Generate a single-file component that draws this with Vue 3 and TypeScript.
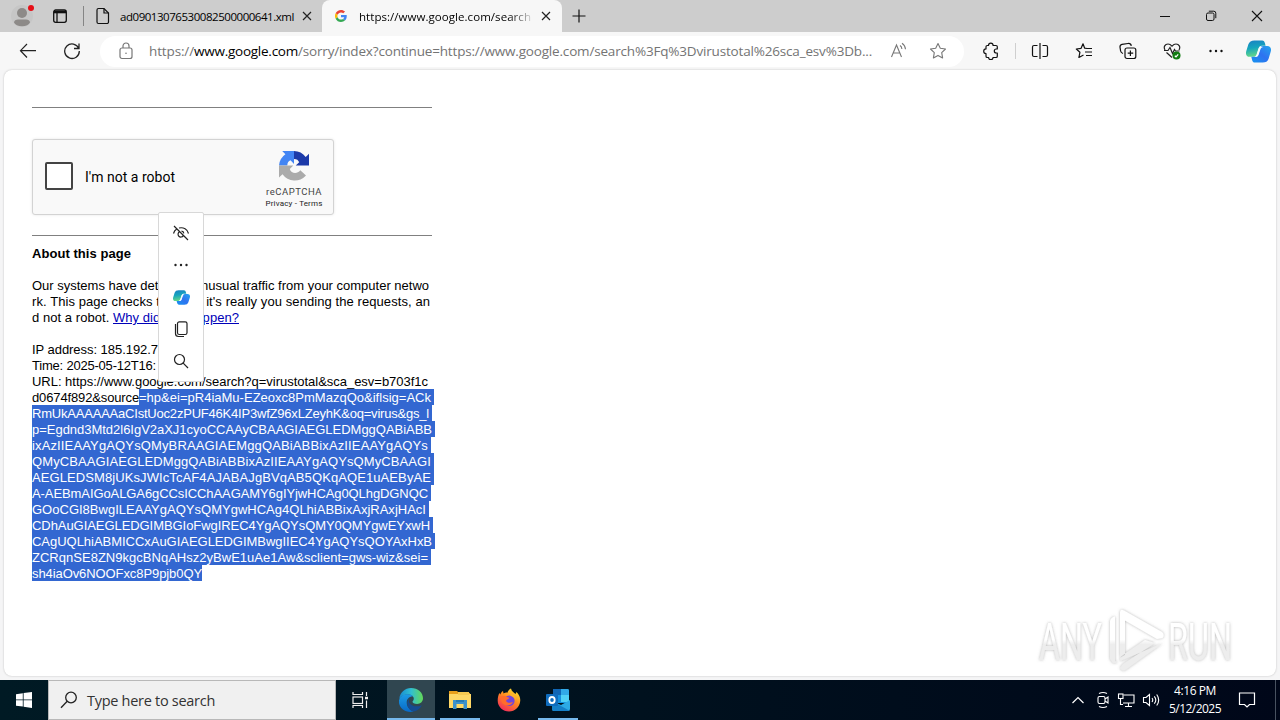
<script setup lang="ts">
import type { Directive } from 'vue'

// Spreads letters so that a run of text takes up the given width in pixels.
const vFit: Directive<HTMLElement, number> = {
  mounted(el, binding) {
    const count = (el.textContent ?? '').length
    const natural = el.getBoundingClientRect().width
    if (count > 0) el.style.letterSpacing = `${(binding.value - natural) / count}px`
  },
}

interface Line { text: string; width: number }

const selected: Line[] = [
  { text: 'RmUkAAAAAAaCIstUoc2zPUF46K4IP3wfZ96xLZeyhK&oq=virus&gs_l', width: 397 },
  { text: 'p=Egdnd3Mtd2l6IgV2aXJ1cyoCCAAyCBAAGIAEGLEDMggQABiABB', width: 400 },
  { text: 'ixAzIIEAAYgAQYsQMyBRAAGIAEMggQABiABBixAzIIEAAYgAQYs', width: 396 },
  { text: 'QMyCBAAGIAEGLEDMggQABiABBixAzIIEAAYgAQYsQMyCBAAGI', width: 399 },
  { text: 'AEGLEDSM8jUKsJWIcTcAF4AJABAJgBVqAB5QKqAQE1uAEByAE', width: 399 },
  { text: 'A-AEBmAIGoALGA6gCCsICChAAGAMY6gIYjwHCAg0QLhgDGNQC', width: 396 },
  { text: 'GOoCGI8BwgILEAAYgAQYsQMYgwHCAg4QLhiABBixAxjRAxjHAcI', width: 394 },
  { text: 'CDhAuGIAEGLEDGIMBGIoFwgIREC4YgAQYsQMY0QMYgwEYxwH', width: 398 },
  { text: 'CAgUQLhiABMICCxAuGIAEGLEDGIMBwgIIEC4YgAQYsQOYAxHxB', width: 400 },
  { text: 'ZCRqnSE8ZN9kgcBNqAHsz2yBwE1uAe1Aw&sclient=gws-wiz&sei=', width: 396 },
]
</script>

<template>
  <div class="screen">
    <svg class="defs" width="0" height="0" aria-hidden="true">
      <defs>
        <linearGradient id="cpA" x1="0" y1="0" x2="0.2" y2="1">
          <stop offset="0" stop-color="#1a7fc4" /><stop offset=".5" stop-color="#15a5bd" /><stop offset="1" stop-color="#62d68a" />
        </linearGradient>
        <linearGradient id="cpB" x1="1" y1="0" x2="0" y2="1">
          <stop offset="0" stop-color="#23a5ee" /><stop offset=".5" stop-color="#2f72f0" /><stop offset="1" stop-color="#1595f0" />
        </linearGradient>
        <symbol id="copilot" viewBox="0 0 24 24">
          <path d="M8 .5h7.500c1.600 0 2.300 1.300 2.700 3l.6 2.500h-3.600c-1.600 0-2.400.9-2.900 2.400l-1.800 6.600c-.5 1.700-1.500 2.500-3.300 2.500H3.500C.3 17.500-.6 14.500.3 11.500l2-7C3.200 1.800 5 .5 8 .5z" fill="url(#cpA)" />
          <path d="M16 23.500H8.500c-1.600 0-2.300-1.300-2.700-3L5.100 17.500h3.600c1.600 0 2.400-.4 2.900-1.900l1.900-6.800c.5-1.700 1.500-2.500 3.200-2.500h3.800c3.200 0 4.100 3 3.200 6l-2 7.200c-.9 2.700-2.700 4-5.700 4z" fill="url(#cpB)" />
          <path d="M13.200 7.200h3.600c-1.700.2-2.500 1-3 2.600l-1.600 5.400c-.4 1.300-1 2-2.100 2.300H7.700c1.300-.3 2-1.100 2.500-2.600l1.700-5.700c.3-1 .7-1.600 1.300-2z" fill="#f4fbff" />
        </symbol>
      </defs>
    </svg>

    <header class="tabs">
      <div class="profile">
        <svg width="28" height="30" viewBox="0 0 28 30"><circle cx="14" cy="16" r="11" fill="#c6c6c6" /><circle cx="14" cy="13" r="5" fill="#8d8a88" /><path d="M6 22.500c0-2 2-3 4-3h8c2 0 4 1 4 3-1 2.300-4 3.700-8 3.700s-7-1.400-8-3.700z" fill="#8d8a88" /><circle cx="23" cy="8" r="3" fill="#e60f17" /></svg>
      </div>
      <div class="workspace">
        <svg width="16" height="16" viewBox="0 0 16 16" fill="none" stroke="#111" stroke-width="1.300"><rect x="1.700" y="2" width="12.600" height="12.300" rx="2" /><path d="M2 4h12" stroke-width="2.600" /><path d="M5 4v10" /></svg>
      </div>
      <span class="sep"></span>
      <div class="tab idle">
        <svg width="14" height="18" viewBox="0 0 14 18" fill="none" stroke="#111" stroke-width="1.200"><path d="M2.500 1.500H8l4.500 4.500v9a1.500 1.500 0 0 1-1.500 1.500H2.500A1.500 1.500 0 0 1 1 15V3a1.500 1.500 0 0 1 1.500-1.500z" /><path d="M8 1.500V6h4.500" /></svg>
        <span class="tab-title"><span v-fit="174">ad09013076530082500000641.xml</span></span>
        <svg class="close" width="10" height="10" viewBox="0 0 10 10" stroke="#222" stroke-width="1.200"><path d="M1 1l8 8M9 1L1 9" /></svg>
      </div>
      <div class="tab active">
        <svg class="google" width="12" height="12" viewBox="0 0 48 48"><path fill="#ea4335" d="M24 9.500c3.540 0 6.710 1.220 9.210 3.600l6.850-6.850C35.900 2.380 30.470 0 24 0 14.620 0 6.510 5.380 2.560 13.220l7.980 6.190C12.430 13.720 17.740 9.500 24 9.500z" /><path fill="#4285f4" d="M46.980 24.550c0-1.570-.15-3.090-.38-4.550H24v9.020h12.940c-.58 2.960-2.260 5.480-4.780 7.180l7.730 6c4.510-4.180 7.090-10.360 7.090-17.650z" /><path fill="#fbbc05" d="M10.530 28.590a14.500 14.500 0 0 1 0-9.180l-7.980-6.190a24 24 0 0 0 0 21.560z" /><path fill="#34a853" d="M24 48c6.480 0 11.930-2.130 15.890-5.810l-7.730-6c-2.150 1.450-4.920 2.300-8.160 2.300-6.260 0-11.570-4.220-13.470-9.910l-7.980 6.190C6.510 42.620 14.620 48 24 48z" /></svg>
        <span class="tab-title fade"><span v-fit="172">https://www.google.com/search</span></span>
        <svg class="close" width="10" height="10" viewBox="0 0 10 10" stroke="#222" stroke-width="1.200"><path d="M1 1l8 8M9 1L1 9" /></svg>
      </div>
      <svg class="plus" width="14" height="14" viewBox="0 0 14 14" stroke="#111" stroke-width="1.200"><path d="M7 .5v13M.5 7h13" /></svg>
      <div class="winbtns">
        <svg width="12" height="12" viewBox="0 0 12 12" stroke="#111"><path d="M1 6.500h10" /></svg>
        <svg width="12" height="12" viewBox="0 0 12 12" fill="none" stroke="#111"><rect x="1.500" y="3" width="7.500" height="7.500" rx="1.500" /><path d="M3.800 1.200h5a2 2 0 0 1 2 2v5" /></svg>
        <svg width="12" height="12" viewBox="0 0 12 12" stroke="#111" stroke-width="1.100"><path d="M1 1l10 10M11 1L1 11" /></svg>
      </div>
    </header>

    <nav class="toolbar">
      <div class="tool"><svg width="18" height="16" viewBox="0 0 18 16" fill="none" stroke="#222" stroke-width="1.200"><path d="M8 1L1.500 7.700 8 14.500M1.500 7.700H17" /></svg></div>
      <div class="tool"><svg width="18" height="18" viewBox="0 0 18 18" fill="none" stroke="#222" stroke-width="1.300"><path d="M15.800 6.500A7.300 7.300 0 1 0 16.300 9M16 1.500v5h-5" /></svg></div>
      <div class="address">
        <svg class="lock" width="14" height="18" viewBox="0 0 14 18" fill="none" stroke="#777" stroke-width="1.200"><rect x="1" y="6" width="12" height="10.500" rx="2" /><path d="M4 6V4a3 3 0 0 1 6 0v2" /><circle cx="7" cy="11.300" r=".8" fill="#777" stroke="none" /></svg>
        <span class="url"><span v-fit="45">https://</span><span v-fit="104" class="host">www.google.com</span><span v-fit="574">/sorry/index?continue=https://www.google.com/search%3Fq%3Dvirustotal%26sca_esv%3Db...</span></span>
        <svg class="read" width="18" height="18" viewBox="0 0 18 18" fill="none" stroke="#777" stroke-width="1.100"><path d="M1.500 15L6.500 3l5 12M3.300 11h6.500M10 3.500c1.300.8 1.800 2 1.900 3.500M12 1.200c2.300 1.400 3.300 3.400 3.500 6" /></svg>
        <svg class="star" width="18" height="18" viewBox="0 0 18 18" fill="none" stroke="#777" stroke-width="1.100" stroke-linejoin="round"><path d="M9 1.500l2.300 4.800 5.200.7-3.800 3.600.9 5.300L9 13.400l-4.600 2.500.9-5.300L1.500 7l5.200-.7z" /></svg>
      </div>
      <div class="tool first"><svg width="18" height="18" viewBox="0 0 18 18" fill="none" stroke="#111" stroke-width="1.200" stroke-linejoin="round"><path d="M6.500 3.500a2.300 2.300 0 0 1 4.600 0H14a1.300 1.300 0 0 1 1.300 1.300V7h-1a2 2 0 0 0 0 4h1v3.200a1.300 1.300 0 0 1-1.300 1.300h-3a2.200 2.200 0 0 1-4.400 0H5.300A1.300 1.300 0 0 1 4 14.200v-2.700a2.300 2.300 0 0 1 0-4.600V4.800a1.300 1.300 0 0 1 1.300-1.300z" /></svg></div>
      <span class="divider"></span>
      <div class="tool split"><svg width="18" height="18" viewBox="0 0 18 18" fill="none" stroke="#111" stroke-width="1.200"><path d="M9 1v16M6.500 3.500H3A1.500 1.500 0 0 0 1.500 5v8A1.500 1.500 0 0 0 3 14.500h3.500M11.500 3.500H15A1.500 1.500 0 0 1 16.500 5v8a1.500 1.500 0 0 1-1.500 1.500h-3.500" /></svg></div>
      <div class="tool"><svg width="18" height="18" viewBox="0 0 18 18" fill="none" stroke="#111" stroke-width="1.200" stroke-linejoin="round"><path d="M12 6.500L9.700 6.200 8 1.800 6.100 6.300l-4.800.7 3.600 3.300-1 5.200L8.500 13M11 6.500h6M10 10h7M11 13.500h6" /></svg></div>
      <div class="tool"><svg width="18" height="18" viewBox="0 0 18 18" fill="none" stroke="#111" stroke-width="1.200"><rect x="6" y="6" width="10.800" height="10.500" rx="2" /><path d="M11.400 8.500v5.500M8.700 11.200h5.500M4 11.500C2.500 11 1.800 10 1.600 9L1 5.200C.8 3.500 1.500 2.700 3 2.400L9 1.500c2-.2 3 .5 3.300 2.300" /></svg></div>
      <div class="tool"><svg width="18" height="18" viewBox="0 0 18 18" fill="none" stroke="#222" stroke-width="1.200"><path d="M2 8C.2 5 2 2 5 2c1.700 0 3 1 4 2.200C10 3 11.300 2 13 2c3 0 4.800 3 3 6M3.500 10.500L9 15.500M1 8.500h4l2-3 2.500 6 2-4 1 1.500h4" /><circle cx="13.500" cy="13.500" r="4" fill="#107c10" stroke="none" /><path d="M11.800 13.700l1.200 1.100 2.200-2.500" stroke="#fff" /></svg></div>
      <div class="tool"><svg width="16" height="4" viewBox="0 0 16 4" fill="#111"><circle cx="2.500" cy="2" r="1.200" /><circle cx="8" cy="2" r="1.200" /><circle cx="13.500" cy="2" r="1.200" /></svg></div>
      <div class="tool cop"><svg width="25" height="23" viewBox="0 0 24 24" preserveAspectRatio="none"><use href="#copilot" width="24" height="24" /></svg></div>
    </nav>

    <main class="page">
      <div class="content">
        <hr />
        <section class="captcha">
          <span class="box"></span>
          <span class="robot"><span v-fit="90">I'm not a robot</span></span>
          <div class="brand">
            <svg width="32" height="32" viewBox="0 0 32 32"><path d="M31 15.500V3.800l-3.300 3.300A15 15 0 0 0 16 1v8c3 0 4.200 1.200 5.200 3.300l-3.500 3.200z" fill="#1c3aa9" /><path d="M16 1H4.200l3.200 3.300A15 15 0 0 0 1 15.500h8.300c0-3 1.300-4.400 3.200-5.300l3.500 3.700z" fill="#4285f4" /><path d="M1 15.500v12l3.500-3.300A15 15 0 0 0 28 25.500l-5.700-5.300c-3 4.200-9.300 3.300-10.500-1.200l3.500-3.500z" fill="#ababab" /></svg>
            <span class="name"><span v-fit="56">reCAPTCHA</span></span>
            <span class="legal"><span v-fit="57">Privacy - Terms</span></span>
          </div>
        </section>
        <hr class="second" />
        <div class="text">
          <p><b v-fit="99">About this page</b></p>
          <p></p>
          <p><span v-fit="397">Our systems have detected unusual traffic from your computer netwo</span></p>
          <p><span v-fit="398">rk. This page checks to see if it's really you sending the requests, an</span></p>
          <p><span v-fit="81">d not a robot. </span><a v-fit="126">Why did this happen?</a></p>
          <p></p>
          <p><span v-fit="126">IP address: 185.192.7</span></p>
          <p><span v-fit="124">Time: 2025-05-12T16:</span></p>
          <p><span v-fit="396">URL: https://www.google.com/search?q=virustotal&amp;sca_esv=b703f1c</span></p>
          <p><span v-fit="107">d0674f892&amp;source</span><span class="sel"><span v-fit="292">=hp&amp;ei=pR4iaMu-EZeoxc8PmMazqQo&amp;iflsig=ACk</span></span></p>
          <p v-for="line in selected" :key="line.text"><span class="sel"><span v-fit="line.width">{{ line.text }}</span></span></p>
          <p><span class="sel last"><span v-fit="170">sh4iaOv6NOOFxc8P9pjb0QY</span></span></p>
        </div>
      </div>

      <aside class="mini">
        <svg width="18" height="18" viewBox="0 0 18 18" fill="none" stroke="#222" stroke-width="1.200"><path d="M2 2l14 14M1.500 9.500c.5-2 1.500-3.500 3.200-4.500M7 4c4.500-1 8.500 1 9.500 5.500M7.500 7.800a2.800 2.800 0 1 0 3.800 3.800M9.500 7.100c1.300.1 2.200 1 2.300 2.300" /></svg>
        <svg width="18" height="18" viewBox="0 0 18 18" fill="#222"><circle cx="3.500" cy="9" r="1.200" /><circle cx="9" cy="9" r="1.200" /><circle cx="14.500" cy="9" r="1.200" /></svg>
        <svg width="17" height="15" viewBox="0 0 24 24" preserveAspectRatio="none"><use href="#copilot" width="24" height="24" /></svg>
        <svg width="18" height="18" viewBox="0 0 18 18" fill="none" stroke="#222" stroke-width="1.200"><rect x="5.500" y="1.800" width="9.500" height="12.700" rx="1.800" /><path d="M3.500 4v9.500a3 3 0 0 0 3 3H12" /></svg>
        <svg width="18" height="18" viewBox="0 0 18 18" fill="none" stroke="#222" stroke-width="1.200"><circle cx="7.500" cy="7.500" r="5" /><path d="M11.200 11.200L16 16" /></svg>
      </aside>

      <svg class="watermark" width="206" height="68" viewBox="0 0 206 68">
        <defs>
          <linearGradient id="wm" x1="0" y1="10" x2="0" y2="60" gradientUnits="userSpaceOnUse"><stop offset=".45" stop-color="#fff" /><stop offset=".55" stop-color="#ededed" /></linearGradient>
          <filter id="wmShadow" x="-10%" y="-10%" width="120%" height="120%"><feDropShadow dx="0" dy="0" stdDeviation="1.700" flood-color="#777" flood-opacity=".55" /></filter>
        </defs>
        <g filter="url(#wmShadow)" fill="url(#wm)">
          <text class="wmtext" x="5" y="53" textLength="63" lengthAdjust="spacingAndGlyphs">ANY</text>
          <text class="wmtext" x="134" y="53" textLength="64" lengthAdjust="spacingAndGlyphs">RUN</text>
          <path d="M86 5.500Q86 1.500 90 3.500L128 25Q131 28 128.500 31L123 32 91 13.500V48L86 51zM81 9.500V54L84 56 79 56 76 52V14Q77 10 81 9.500zM129 36L92 62.500Q88 65 86 61L89 57 121 36 111 33 86 50V54L91 52z" />
        </g>
      </svg>
    </main>

    <footer class="taskbar">
      <div class="start"><svg width="16" height="16" viewBox="0 0 16 16" fill="#fff"><path d="M0 2.200L6.800 1.200v6.300H0zM7.600 1.100L16 0v7.500H7.600zM0 8.300h6.800v6.300L0 13.700zM7.600 8.300H16V16l-8.400-1.200z" /></svg></div>
      <div class="search">
        <svg width="18" height="18" viewBox="0 0 18 18" fill="none" stroke="#222" stroke-width="1.300"><circle cx="11" cy="6.500" r="5.300" /><path d="M7.200 10.300L1 16.800" /></svg>
        <span><span v-fit="128">Type here to search</span></span>
      </div>
      <div class="app view"><svg width="18" height="18" viewBox="0 0 18 18" fill="none" stroke="#eee" stroke-width="1.200"><rect x="2" y="6" width="9.500" height="6.500" /><path d="M2 1v2.500h9.500V1M2 17v-2.500h9.500V17M15.500 1v4M15.500 9.500V17" /><path d="M14 7h3" stroke-width="2.500" /></svg></div>
      <div class="app current">
        <svg width="24" height="24" viewBox="0 0 24 24"><defs><linearGradient id="eg" x1="0" x2="1"><stop offset="0" stop-color="#168bd2" /><stop offset=".5" stop-color="#31bfd1" /><stop offset="1" stop-color="#64d957" /></linearGradient><linearGradient id="eb" x1="0" y1="0" x2="0" y2="1"><stop offset="0" stop-color="#1c9be5" /><stop offset="1" stop-color="#0869c7" /></linearGradient></defs><path d="M.3 10.500C1.200 4.200 6 0 12 0c7 0 12 4.800 12 10.300 0 3.500-2.700 5.700-5.800 5.700-3 0-4.700-1-4.700-2.200 0-.8 1.300-1.200 1.300-3C14.800 8 12 6.500 8.800 6.500 5 6.500 1.500 8.200.3 10.500z" fill="url(#eg)" /><path d="M.2 12C.8 8 5 6.300 8.800 6.300c2.300 0 4.200.8 5.200 2-4.500.2-6.300 3.400-6.300 6.200 0 4.300 3 7.700 7 9C6.500 25.500-.8 20-.2 12z" fill="url(#eb)" /><path d="M10 10.500c-3.500 4-1.500 11.500 4.700 13 3.500-.8 6.300-3 7.800-5.500.2-.5-.2-.9-.7-.6-3 1.600-9 1.500-11.300-2.400-.7-1.200-.9-3-.5-4.500z" fill="#154b91" /></svg>
      </div>
      <div class="app open">
        <svg width="22" height="20" viewBox="0 0 22 20"><path d="M0 1h8l2 2h11v5H0z" fill="#e9a01b" /><path d="M0 4h22v14H0z" fill="#ffd866" /><path d="M9 2h11v3H9z" fill="#f7ca52" /><path d="M4 10h14v9h-3.500v-5h-7v5H4z" fill="#3c91cb" /><path d="M7 10h8v2H7z" fill="#247ab5" /></svg>
      </div>
      <div class="app">
        <svg width="24" height="24" viewBox="0 0 24 24"><defs><linearGradient id="ff" x1=".8" y1="0" x2=".2" y2="1"><stop offset="0" stop-color="#ffe72f" /><stop offset=".45" stop-color="#ff8a20" /><stop offset="1" stop-color="#f2245f" /></linearGradient></defs><path d="M2.500 5l.8 1.500C4 4.500 5 3.500 6 3l.5 2.500c2-1 3-1 4-.8C11 3 12 1.500 14 .5c.5 3 3 4 4.500 5.500L19.500 4c3 3 4 6 3.700 9-.5 6-5.200 10.500-11.200 10.500S.7 19 .7 12.800C.7 9.500 1.300 7 2.500 5z" fill="url(#ff)" /><circle cx="12.300" cy="12.800" r="5.300" fill="#7145dc" /><path d="M3.500 8c2 .5 3.500-.3 5 .2 1 .5 2 1.300 4 1.500-1 1.700-2.700 1.400-3.400 3 .7 2.500 4.500 2.800 6.800 1-1 4.500-9 5.300-11.400 0z" fill="#ff6c2c" /><path d="M12 4.500c5 0 7 4 7 8-1-2.500-3-4-5-4.500z" fill="#ffb42b" /></svg>
      </div>
      <div class="app open">
        <svg width="24" height="22" viewBox="0 0 24 22"><path d="M7 1.500Q7 0 8.500 0h13Q23 0 23 1.500V14H7z" fill="#1490df" /><path d="M7 0h8v6H7z" fill="#1066b5" /><path d="M15 0h6.500Q23 0 23 1.500V6h-8z" fill="#32a9e7" /><path d="M15 6h8v7h-8z" fill="#50d0f5" /><path d="M6 12l9 4 9-5v9q0 2-2 2H8q-2 0-2-2z" fill="#2caae5" /><path d="M6 12l18 10H8q-2 0-2-2z" fill="#1580c8" /><rect x="0" y="5" width="12" height="12" rx="1" fill="#0f6cbd" /><ellipse cx="6" cy="11" rx="2.700" ry="3" fill="none" stroke="#fff" stroke-width="1.800" /></svg>
      </div>
      <div class="tray">
        <svg width="14" height="8" viewBox="0 0 14 8" fill="none" stroke="#fff" stroke-width="1.200"><path d="M1.500 7L7 1.500 12.500 7" /></svg>
        <svg width="14" height="18" viewBox="0 0 14 18" fill="none" stroke="#fff" stroke-width="1.100"><rect x="2" y="5.500" width="7" height="7" rx="1.500" /><path d="M9 8l3-2v6l-3-2M3 2.500q4-2 8 0M3 15.500q4 2 8 0" /></svg>
        <svg width="18" height="16" viewBox="0 0 18 16" fill="none" stroke="#fff" stroke-width="1.100"><path d="M6.500 3H17v8H6M8 14.500h7M11.500 11v3.500M3.500 6.500v6H6" /><rect x="1.500" y="2" width="4.500" height="4.500" /></svg>
        <svg width="18" height="16" viewBox="0 0 18 16" fill="none" stroke="#fff" stroke-width="1.100"><path d="M1.500 5.500H4L7.500 2.500v11L4 10.500H1.500zM10 6q1.500 2 0 4M12.300 4.300q3 3.700 0 7.400M14.700 2.500q4 5.500 0 11" /></svg>
      </div>
      <div class="clock"><span><span v-fit="42">4:16 PM</span></span><span><span v-fit="52">5/12/2025</span></span></div>
      <svg class="note" width="18" height="18" viewBox="0 0 18 18" fill="none" stroke="#fff" stroke-width="1.200"><path d="M1.500 2h15v11.500h-5L9 16l-2.500-2.500h-5z" /></svg>
      <span class="peek"></span>
    </footer>
  </div>
</template>

<style>
html, body { overflow: hidden; }
</style>

<style scoped>
.screen { position: relative; width: 1280px; height: 720px; display: flex; flex-direction: column; overflow: hidden; background: #f5f5f6; font-family: "Open Sans", "Noto Sans", sans-serif; color: #000; }
.screen svg { flex: none; display: block; }
.defs { position: absolute; }
.screen span { white-space: pre; }
.tabs { height: 32px; flex: none; display: flex; align-items: center; background: #cdcdcd; font-size: 11.5px; }
.profile { width: 36px; padding-left: 8px; box-sizing: content-box; height: 32px; }
.workspace { width: 39px; padding-left: 8px; }
.sep { width: 1px; height: 20px; margin-left: -8px; background: #858585; }
.tab { display: flex; align-items: center; height: 32px; box-sizing: border-box; }
.idle { width: 238px; padding-left: 12px; }
.idle .tab-title { margin-left: 10px; width: 182px; }
.active { width: 240px; background: #f7f7f7; border-radius: 8px 8px 0 0; padding-left: 13px; }
.active .tab-title { margin-left: 12px; width: 182px; }
.fade { -webkit-mask-image: linear-gradient(90deg, #000 150px, transparent 176px); mask-image: linear-gradient(90deg, #000 150px, transparent 176px); }
.plus { margin-left: 10px; }
.winbtns { margin-left: auto; display: flex; gap: 34px; padding-right: 17px; }
.toolbar { height: 38px; flex: none; display: flex; align-items: center; padding-left: 6px; background: #f7f7f7; }
.tool { width: 44px; height: 38px; flex: none; display: flex; align-items: center; justify-content: center; }
.address { width: 864px; height: 31px; margin-left: 6px; flex: none; box-sizing: border-box; border-radius: 16px; background: #fff; display: flex; align-items: center; padding-left: 19px; }
.url { display: flex; width: 724px; margin-left: 16px; font-size: 13.5px; color: #747474; line-height: 20px; }
.host { color: #000; }
.read { margin-left: 17px; }
.star { margin-left: 21px; }
.first { margin-left: 5px; }
.divider { width: 1px; height: 16px; margin-left: 2px; background: #cfcfcf; }
.split { margin-left: 2px; }
.cop { width: 40px; }
.page { position: relative; width: 1272px; height: 606px; flex: none; margin: 0 4px; box-sizing: border-box; background: #fff; border-radius: 8px; box-shadow: 0 0 2px #bbb; }
.content { width: 400px; margin-left: 28px; padding-top: 37px; }
hr { margin: 0; border: 0; height: 1px; background: #808080; }
.captcha { width: 302px; height: 76px; margin-top: 31px; box-sizing: border-box; display: flex; align-items: center; background: #f9f9f9; border: 1px solid #d3d3d3; border-radius: 3px; box-shadow: 0 0 3px rgba(0, 0, 0, .1); padding-left: 12px; font-family: Roboto, sans-serif; }
.box { width: 28px; height: 28px; box-sizing: border-box; border: 2px solid #444; border-radius: 2px; background: #fff; margin-top: -2px; }
.robot { width: 180px; margin-left: 12px; font-size: 14px; }
.brand { width: 58px; display: flex; flex-direction: column; align-items: center; color: #444; padding-top: 5px; }
.name { font-size: 9.5px; line-height: 13px; margin-top: 3px; }
.legal { font-size: 8px; line-height: 11px; color: #222; }
.second { margin-top: 20px; }
.text { margin-top: 9px; font-family: "Liberation Sans", Arial, sans-serif; font-size: 13px; }
.text p { margin: 0; height: 16px; line-height: 18px; white-space: pre; display: flex; }
.text a { color: #0000b8; text-decoration: underline; }
.sel { background: #3367d1; color: #fff; padding-right: 3px; height: 16px; }
.last { padding-right: 0; }
.mini { position: absolute; left: 154px; top: 142px; width: 46px; height: 170px; box-sizing: border-box; background: #fff; border: 1px solid #d8d8d8; border-radius: 2px; display: grid; grid-template-rows: repeat(5, 32px); place-items: center; padding-top: 4px; }
.watermark { position: absolute; left: 1030px; top: 537px; overflow: visible; }
.wmtext { font-family: Roboto, sans-serif; font-size: 52px; font-weight: 400; }
.taskbar { height: 40px; flex: none; margin-top: 4px; display: flex; align-items: center; background: linear-gradient(90deg, #001a24, #00111e 50%, #000719); color: #fff; }
.start { width: 48px; display: flex; justify-content: center; }
.search { width: 288px; height: 40px; box-sizing: border-box; background: #f0f0f0; border: 1px solid #b8b8b8; color: #333; display: flex; align-items: center; padding-left: 11px; font-size: 14.5px; gap: 9px; }
.app { position: relative; width: 49px; height: 40px; display: flex; align-items: center; justify-content: center; }
.view { width: 51px; box-sizing: border-box; padding-right: 4px; }
.current { width: 48px; background: #304650; box-shadow: inset 0 -2px #76b9ed; }
.open { background: linear-gradient(#76b9ed, #76b9ed) center bottom / 40px 2px no-repeat; }
.tray { margin-left: auto; display: flex; align-items: center; gap: 7px; }
.tray svg:first-child { margin-right: 4px; }
.clock { width: 54px; margin-left: 8px; display: flex; flex-direction: column; align-items: center; font-size: 12px; line-height: 18px; }
.note { margin-left: 16px; }
.peek { width: 1px; height: 40px; margin: 0 4px 0 19px; background: #485260; }
</style>
